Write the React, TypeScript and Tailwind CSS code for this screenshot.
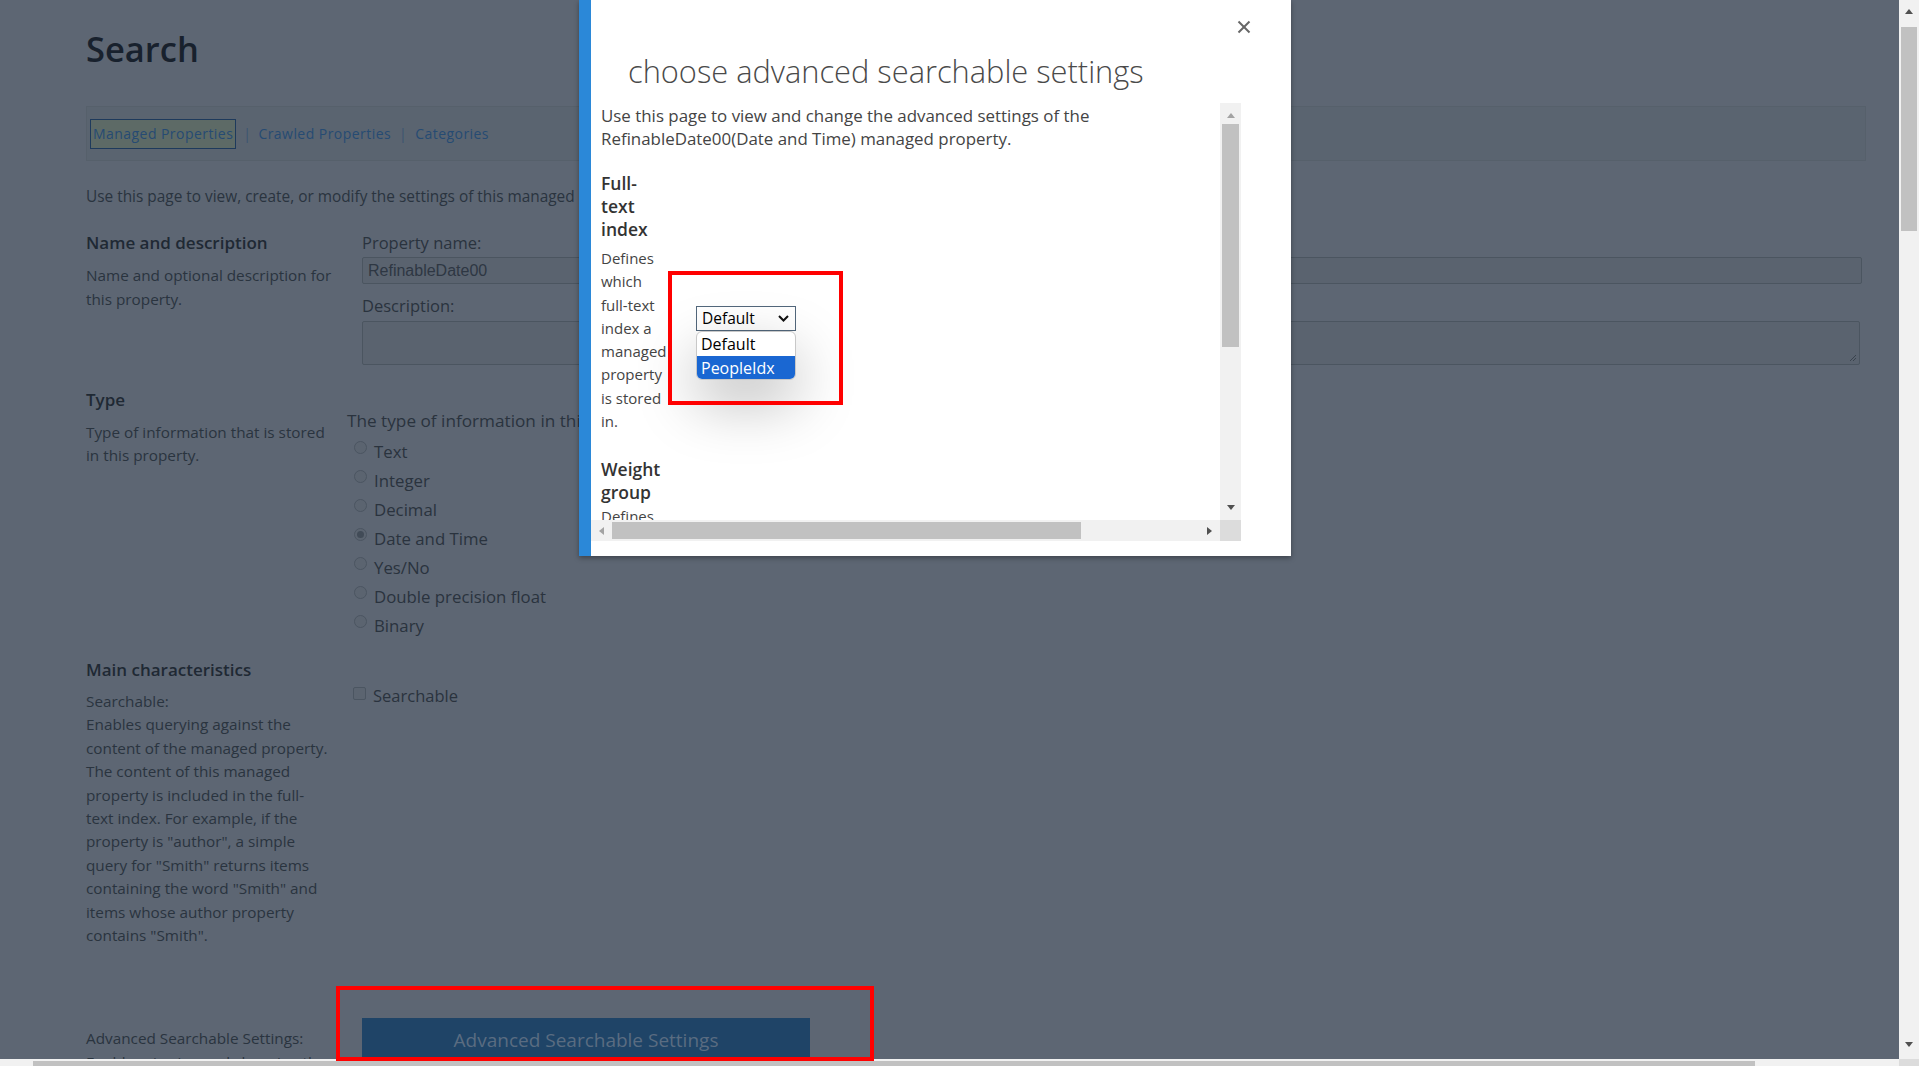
import React from "react";

function Tri({ dir, color }: { dir: "up" | "down" | "left" | "right"; color: string }) {
  const pts =
    dir === "up"
      ? "0,5 4,0 8,5"
      : dir === "down"
      ? "0,0 8,0 4,5"
      : dir === "left"
      ? "5,0 5,8 0,4"
      : "0,0 0,8 5,4";
  const w = dir === "up" || dir === "down" ? 8 : 5;
  const h = dir === "up" || dir === "down" ? 5 : 8;
  return (
    <svg width={w} height={h} viewBox={`0 0 ${w} ${h}`}>
      <polygon points={pts} fill={color} />
    </svg>
  );
}

function Radio({ checked }: { checked?: boolean }) {
  return (
    <span className="mb-[8px] flex h-[13px] w-[13px] items-center justify-center rounded-full border border-[#4b5561] bg-[#5b6470]">
      {checked ? <span className="h-[7px] w-[7px] rounded-full bg-[#414b57]" /> : null}
    </span>
  );
}

export default function App() {
  const searchableLines = [
    "Searchable:",
    "Enables querying against the",
    "content of the managed property.",
    "The content of this managed",
    "property is included in the full-",
    "text index. For example, if the",
    'property is "author", a simple',
    'query for "Smith" returns items',
    'containing the word "Smith" and',
    "items whose author property",
    'contains "Smith".',
  ];
  const types = ["Text", "Integer", "Decimal", "Date and Time", "Yes/No", "Double precision float", "Binary"];
  const fullTextDesc = ["Defines", "which", "full-text", "index a", "managed", "property", "is stored", "in."];

  return (
    <div className="relative flex h-[1066px] w-[1919px] overflow-hidden bg-[#5d6673] font-['Open_Sans','Noto_Sans',sans-serif]">
      {/* page */}
      <div className="flex w-[1899px] flex-col">
        <main className="h-[1059px] overflow-hidden pl-[86px] pr-[33px]">
          <h1 className="pt-[27px] text-[34.5px] font-semibold leading-[44px] text-[#18212d]">Search</h1>

          <div className="mt-[35px] flex h-[55px] items-center border border-[#56606b] bg-[#5a6470] pl-[3px] text-[14px] tracking-[0.45px] text-[#264b73]">
            <span className="flex h-[30px] items-center border border-[#1e3a5c] bg-[#5d6a66] px-[2px]">Managed Properties</span>
            <span className="mx-[7px] text-[#3b5470]">|</span>
            <span>Crawled Properties</span>
            <span className="mx-[8px] text-[#3b5470]">|</span>
            <span>Categories</span>
          </div>

          <p className="mt-[24px] whitespace-nowrap text-[15.4px] leading-[24px] text-[#2a343f]">
            Use this page to view, create, or modify the settings of this managed property.
          </p>

          {/* Name and description */}
          <section className="mt-[22px] flex items-start">
            <div className="w-[261px] shrink-0">
              <h3 className="text-[17px] font-semibold leading-[24px] text-[#1f2934]">Name and description</h3>
              <p className="mt-[8px] text-[15.3px] leading-[24px] text-[#2a343f]">
                <span className="block whitespace-nowrap">Name and optional description for</span>
                <span className="block">this property.</span>
              </p>
            </div>
            <div className="flex-1 pl-[15px]">
              <div className="text-[16.5px] leading-[24px] text-[#2a333e]">Property name:</div>
              <div className="mr-[4px] mt-[2px] flex h-[27px] items-center rounded-[2px] border border-[#4b5560] bg-[#5a636f] pl-[5px] font-['Liberation_Sans',Arial,sans-serif] text-[16px] text-[#2e3743]">
                RefinableDate00
              </div>
              <div className="mt-[10px] text-[16.5px] leading-[24px] text-[#2a333e]">Description:</div>
              <div className="relative mr-[6px] mt-[3px] h-[44px] rounded-[2px] border border-[#4b5560] bg-[#5a636f]">
                <svg className="absolute bottom-[2px] right-[2px]" width="8" height="8" viewBox="0 0 8 8">
                  <line x1="1" y1="7" x2="7" y2="1" stroke="#3a434e" strokeWidth="1" />
                  <line x1="4" y1="7" x2="7" y2="4" stroke="#3a434e" strokeWidth="1" />
                </svg>
              </div>
            </div>
          </section>

          {/* Type */}
          <section className="mt-[23px] flex items-start">
            <div className="w-[261px] shrink-0">
              <h3 className="text-[17px] font-semibold leading-[24px] text-[#1f2934]">Type</h3>
              <p className="mt-[9px] text-[15.3px] leading-[23px] text-[#2a343f]">
                <span className="block whitespace-nowrap">Type of information that is stored</span>
                <span className="block">in this property.</span>
              </p>
            </div>
            <div className="flex-1 pt-[21px]">
              <div className="whitespace-nowrap text-[17.2px] leading-[24px] text-[#2a333e]">
                The type of information in this property. Once the type has been set, it cannot be changed.
              </div>
              <div className="mt-[4px] flex flex-col">
                {types.map((t) => (
                  <div key={t} className="flex h-[29px] items-center pl-[7px] text-[16.8px] text-[#2a333e]">
                    <Radio checked={t === "Date and Time"} />
                    <span className="ml-[7px]">{t}</span>
                  </div>
                ))}
              </div>
            </div>
          </section>

          {/* Main characteristics */}
          <section className="mt-[18px] flex items-start">
            <div className="w-[261px] shrink-0">
              <h3 className="text-[17px] font-semibold leading-[24px] text-[#1f2934]">Main characteristics</h3>
              <p className="mt-[8px] text-[15.3px] leading-[23.4px] text-[#2a343f]">
                {searchableLines.map((l) => (
                  <span key={l} className="block whitespace-nowrap">
                    {l}
                  </span>
                ))}
              </p>
            </div>
            <div className="flex-1 pt-[26px]">
              <div className="flex h-[24px] items-center pl-[6px] text-[16.5px] text-[#2a333e]">
                <span className="mb-[5px] h-[13px] w-[13px] rounded-[2px] border border-[#4b5561] bg-[#5b6470]" />
                <span className="ml-[7px]">Searchable</span>
              </div>
            </div>
          </section>

          {/* Advanced */}
          <section className="mt-[71px] flex items-start">
            <div className="w-[261px] shrink-0 pt-[9px] text-[15.3px] leading-[23.4px] text-[#2a343f]">
              <span className="block whitespace-nowrap">Advanced Searchable Settings:</span>
              <span className="block whitespace-nowrap">Enables viewing and changing the</span>
            </div>
            <div className="flex-1 pl-[15px]">
              <div className="flex h-[43px] w-[448px] items-center justify-center bg-[#1f4467] text-[19px] text-[#5a6c81]">
                Advanced Searchable Settings
              </div>
            </div>
          </section>
        </main>

        {/* page horizontal scrollbar */}
        <div className="flex h-[7px] items-end bg-[#f1f1f1]">
          <div className="ml-[33px] h-[5px] w-[1722px] bg-[#c1c1c1]" />
        </div>
      </div>

      {/* page vertical scrollbar */}
      <div className="flex w-[20px] flex-col bg-[#f1f1f1]">
        <div className="flex h-[25px] items-center justify-center pb-[2px]">
          <Tri dir="up" color="#505050" />
        </div>
        <div className="mx-[2px] mt-[2px] h-[204px] bg-[#c1c1c1]" />
        <div className="flex-1" />
        <div className="flex h-[24px] items-center justify-center pb-[6px]">
          <Tri dir="down" color="#505050" />
        </div>
        <div className="h-[7px] bg-[#dcdcdc]" />
      </div>

      {/* red annotation around button */}
      <div className="pointer-events-none absolute left-[336px] top-[986px] h-[75px] w-[538px] border-[4px] border-[#ff0000]" />

      {/* dialog */}
      <div className="absolute left-[579px] top-0 flex h-[556px] w-[712px] flex-col border-l-[12px] border-[#2b88d8] bg-white shadow-[0_2px_5px_rgba(0,0,0,0.35)]">
        <div className="relative h-[103px] shrink-0">
          <svg className="absolute right-[40px] top-[20px]" width="14" height="14" viewBox="0 0 14 14">
            <line x1="1.5" y1="1.5" x2="12.5" y2="12.5" stroke="#666" strokeWidth="2" />
            <line x1="12.5" y1="1.5" x2="1.5" y2="12.5" stroke="#666" strokeWidth="2" />
          </svg>
          <h2 className="whitespace-nowrap pl-[37px] pt-[51px] text-[30.8px] font-light leading-[40px] text-[#4a4a4a]">
            choose advanced searchable settings
          </h2>
        </div>

        {/* iframe */}
        <div className="flex h-[438px] w-[650px] flex-col">
          <div className="flex h-[417px]">
            <div className="flex-1 overflow-hidden pl-[10px] text-[#444]">
              <p className="whitespace-nowrap pt-[1px] text-[16.9px] leading-[23px]">
                <span className="block">Use this page to view and change the advanced settings of the</span>
                <span className="block">RefinableDate00(Date and Time) managed property.</span>
              </p>

              <div className="mt-[22px] flex items-start">
                <div className="w-[67px] shrink-0">
                  <div className="text-[17.5px] font-semibold leading-[23px] text-[#333]">
                    <span className="block">Full-</span>
                    <span className="block">text</span>
                    <span className="block">index</span>
                  </div>
                  <div className="mt-[6px] text-[15px] leading-[23.3px] text-[#444]">
                    {fullTextDesc.map((l) => (
                      <span key={l} className="block whitespace-nowrap">
                        {l}
                      </span>
                    ))}
                  </div>
                </div>
                <div className="relative flex-1">
                  <div className="relative ml-[28px] mt-[134px] w-[100px]">
                    <div className="flex h-[25px] items-center justify-between border border-[#52677b] bg-white pl-[5px] pr-[6px] text-[15.5px] text-black">
                      <span>Default</span>
                      <svg width="11" height="7" viewBox="0 0 11 7">
                        <polyline points="1,1 5.5,5.5 10,1" fill="none" stroke="#111" strokeWidth="2" />
                      </svg>
                    </div>
                    <div className="absolute left-0 top-[25px] z-10 w-[100px] overflow-hidden rounded-[6px] border border-[#c8c8c8] bg-white text-[16px] shadow-[0_22px_60px_rgba(0,0,0,0.28)]">
                      <div className="flex h-[24px] items-center pl-[4px] text-black">Default</div>
                      <div className="flex h-[23px] items-center bg-[#1a67d2] pl-[4px] text-white">PeopleIdx</div>
                    </div>
                  </div>
                  <div className="pointer-events-none absolute left-0 top-[99px] z-20 h-[134px] w-[175px] border-[4px] border-[#ff0000]" />
                </div>
              </div>

              <div className="mt-[25px]">
                <div className="text-[17.5px] font-semibold leading-[23px] text-[#333]">
                  <span className="block">Weight</span>
                  <span className="block">group</span>
                </div>
                <div className="mt-[1px] text-[15px] leading-[23.3px] text-[#444]">Defines</div>
              </div>
            </div>
            {/* iframe vertical scrollbar */}
            <div className="flex w-[21px] flex-col bg-[#f1f1f1]">
              <div className="flex h-[21px] items-center justify-center pt-[4px]">
                <Tri dir="up" color="#a3a3a3" />
              </div>
              <div className="mx-[2px] h-[223px] bg-[#c1c1c1]" />
              <div className="flex-1" />
              <div className="flex h-[21px] items-center justify-center pb-[4px]">
                <Tri dir="down" color="#505050" />
              </div>
            </div>
          </div>
          <div className="flex h-[21px]">
            <div className="relative flex flex-1 items-center bg-[#f1f1f1]">
              <div className="flex w-[21px] items-center justify-center">
                <Tri dir="left" color="#a3a3a3" />
              </div>
              <div className="h-[17px] w-[469px] bg-[#c1c1c1]" />
              <div className="flex-1" />
              <div className="flex w-[21px] items-center justify-center">
                <Tri dir="right" color="#505050" />
              </div>
            </div>
            <div className="w-[21px] bg-[#dcdcdc]" />
          </div>
        </div>
      </div>
    </div>
  );
}
